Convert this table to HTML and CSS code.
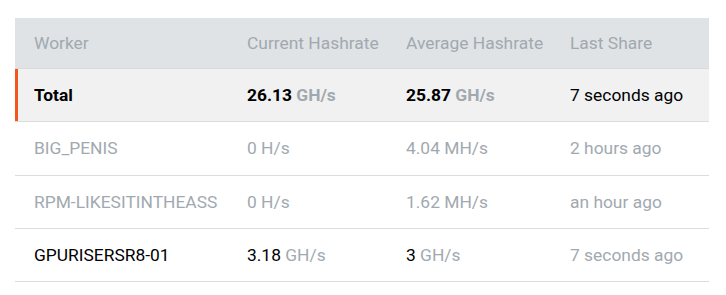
FILE: index.html
```html
<!DOCTYPE html>
<html>
<head>
<meta charset="utf-8">
<link rel="stylesheet" href="styles.css">
</head>
<body>
<div class="page">
  <div class="table">
    <div class="row head">
      <div class="cell">Worker</div>
      <div class="cell">Current Hashrate</div>
      <div class="cell">Average Hashrate</div>
      <div class="cell">Last Share</div>
    </div>
    <div class="row total">
      <div class="cell">Total</div>
      <div class="cell">26.13 <span class="unit">GH/s</span></div>
      <div class="cell">25.87 <span class="unit">GH/s</span></div>
      <div class="cell last">7 seconds ago</div>
    </div>
    <div class="row idle">
      <div class="cell">BIG_PENIS</div>
      <div class="cell">0 H/s</div>
      <div class="cell">4.04 MH/s</div>
      <div class="cell">2 hours ago</div>
    </div>
    <div class="row idle">
      <div class="cell">RPM-LIKESITINTHEASS</div>
      <div class="cell">0 H/s</div>
      <div class="cell">1.62 MH/s</div>
      <div class="cell">an hour ago</div>
    </div>
    <div class="row">
      <div class="cell">GPURISERSR8-01</div>
      <div class="cell">3.18 <span class="unit">GH/s</span></div>
      <div class="cell">3 <span class="unit">GH/s</span></div>
      <div class="cell muted">7 seconds ago</div>
    </div>
  </div>
</div>
</body>
</html>
```
FILE: styles.css
```css
html, body {
  margin: 0;
  padding: 0;
  background: #ffffff;
}
.page {
  padding: 18px 17px 0 15px;
  font-family: Roboto, "Liberation Sans", sans-serif;
  font-size: 17.4px;
  color: #000;
}
.table {
  width: 694px;
}
.row {
  display: grid;
  grid-template-columns: 213px 159px 164px 158px;
  align-items: center;
  height: 52.33px;
  border-bottom: 1px solid #dcdcdc;
}
.cell {
  padding-left: 19px;
  white-space: nowrap;
}
.head {
  height: 50px;
  background: #dfe3e5;
  color: #a1a9b0;
  border-bottom: 1px solid #d8dbdd;
}
.total {
  background: #f1f1f1;
  font-weight: 700;
  box-shadow: inset 3px 0 0 #f4561a;
}
.total .last {
  font-weight: 400;
}
.unit {
  color: #a1a9b0;
}
.idle {
  color: #a1a9b0;
}
.muted {
  color: #a1a9b0;
}
```
